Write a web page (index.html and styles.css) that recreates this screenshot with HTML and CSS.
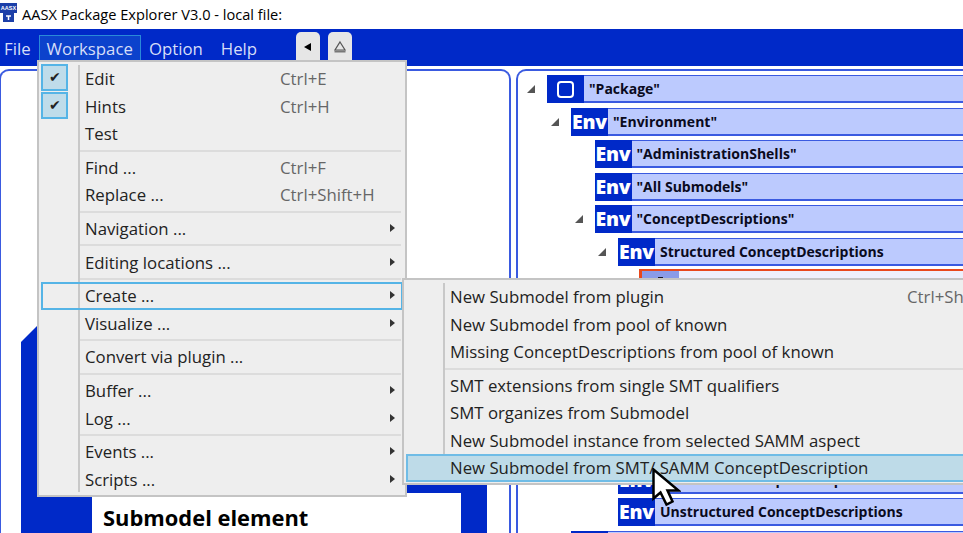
FILE: index.html
```html
<!DOCTYPE html>
<html lang="en">
<head>
    <meta charset="UTF-8" />
    <title>AASX Package Explorer</title>
    <link rel="stylesheet" href="styles.css">
</head>
<body>
<div class="titlebar">
    <svg class="app-icon" width="18" height="21" viewBox="0 0 18 21">
        <rect x="0" y="0" width="17" height="10" fill="#1c3fa8"/>
        <text x="8.500" y="7" font-size="5.500" font-weight="700" fill="#fff" text-anchor="middle" font-family="Liberation Sans">AASX</text>
        <rect x="3" y="10" width="11" height="9" fill="#1c3fa8"/>
        <path d="M6 13h5M8.500 13v4" stroke="#fff" stroke-width="1.500"/>
    </svg>
    <span>AASX Package Explorer V3.0 - local file:</span>
</div>

<div class="menubar">
    <span class="top-item first">File</span>
    <span class="top-item open">Workspace</span>
    <span class="top-item">Option</span>
    <span class="top-item help">Help</span>
    <div class="tool-btns">
        <div class="tool-btn"><svg width="10" height="10" viewBox="0 0 10 10"><path d="M8 1v8L1 5z" fill="#000"/></svg></div>
        <div class="tool-btn"><svg width="14" height="14" viewBox="0 0 14 14"><path d="M7 2l5 8H2z" fill="none" stroke="#555" stroke-width="1.200"/><path d="M1.500 11.500h11" stroke="#777" stroke-width="2"/></svg></div>
    </div>
</div>

<div class="workspace">
    <div class="panel panel-left">
        <div class="element-box">
            <div class="element-card">
                <h2>Submodel element</h2>
            </div>
        </div>
    </div>
    <div class="panel panel-right">
        <div class="tree">
            <div class="row lvl0 arrow"><b class="ico"><i class="ico-square"></i></b><span>"Package"</span></div>
            <div class="row lvl1 arrow"><b class="ico">Env</b><span>"Environment"</span></div>
            <div class="row lvl2"><b class="ico">Env</b><span>"AdministrationShells"</span></div>
            <div class="row lvl2"><b class="ico">Env</b><span>"All Submodels"</span></div>
            <div class="row lvl2 arrow"><b class="ico">Env</b><span>"ConceptDescriptions"</span></div>
            <div class="row lvl3 arrow"><b class="ico">Env</b><span>Structured ConceptDescriptions</span></div>
            <div class="row lvl4 selected"><b class="ico"><i class="ico-mark"></i></b><span></span></div>
            <div class="row-gap"></div>
            <div class="row lvl3"><b class="ico">Env</b><span>Submodel ConceptDescriptions</span></div>
            <div class="row lvl3"><b class="ico">Env</b><span>Unstructured ConceptDescriptions</span></div>
            <div class="row lvl1"><b class="ico"></b><span></span></div>
        </div>
    </div>
</div>

<div class="menu main-menu">
    <div class="item checked"><em>✔</em><span>Edit</span><kbd>Ctrl+E</kbd></div>
    <div class="item checked"><em>✔</em><span>Hints</span><kbd>Ctrl+H</kbd></div>
    <div class="item"><span>Test</span></div>
    <hr>
    <div class="item"><span>Find ...</span><kbd>Ctrl+F</kbd></div>
    <div class="item"><span>Replace ...</span><kbd>Ctrl+Shift+H</kbd></div>
    <hr>
    <div class="item sub"><span>Navigation ...</span></div>
    <hr>
    <div class="item sub"><span>Editing locations ...</span></div>
    <hr>
    <div class="item sub active-outline"><span>Create ...</span></div>
    <div class="item sub"><span>Visualize ...</span></div>
    <hr>
    <div class="item"><span>Convert via plugin ...</span></div>
    <hr>
    <div class="item sub"><span>Buffer ...</span></div>
    <div class="item sub"><span>Log ...</span></div>
    <hr>
    <div class="item sub"><span>Events ...</span></div>
    <div class="item sub"><span>Scripts ...</span></div>
</div>

<div class="menu sub-menu">
    <div class="item"><span>New Submodel from plugin</span><kbd>Ctrl+Shift+P</kbd></div>
    <div class="item"><span>New Submodel from pool of known</span></div>
    <div class="item"><span>Missing ConceptDescriptions from pool of known</span></div>
    <hr>
    <div class="item"><span>SMT extensions from single SMT qualifiers</span></div>
    <div class="item"><span>SMT organizes from Submodel</span></div>
    <div class="item"><span>New Submodel instance from selected SAMM aspect</span></div>
    <div class="item highlighted"><span>New Submodel from SMT/ SAMM ConceptDescription</span></div>
</div>

<svg class="cursor" width="29" height="39" viewBox="0 0 29 39">
    <path d="M1.500 1.500v29l7-6 6 12 6-3-5-11h11z" fill="#fff" stroke="#000" stroke-width="2.500"/>
</svg>
</body>
</html>
```

FILE: styles.css
```css
body {
    margin: 0;
    width: 963px;
    height: 533px;
    overflow: hidden;
    background: #fff;
    font-family: "Open Sans", "Noto Sans", sans-serif;
    position: relative;
}

.titlebar {
    height: 29px;
    display: flex;
    align-items: center;
    gap: 4px;
    font-size: 14.6px;
    color: #000;
    box-sizing: border-box;
    padding-bottom: 2px;
}

.app-icon {
    flex: none;
}

.menubar {
    height: 37px;
    background: #0029c8;
    display: flex;
    align-items: flex-start;
    color: #d6def8;
    font-size: 16.8px;
}

.top-item {
    height: 26px;
    line-height: 27px;
    padding: 0 8px;
    margin-top: 6px;
    box-sizing: border-box;
}

.top-item.first {
    padding: 0 8px 0 4px;
}

.top-item.help {
    margin-left: 2px;
}

.top-item.open {
    background: #0c42cc;
    outline: 1px solid #2a8ad8;
    outline-offset: -1px;
}

.tool-btns {
    display: flex;
    gap: 8px;
    margin: 3px 0 0 31px;
}

.tool-btn {
    width: 24px;
    height: 30px;
    background: #e6e6e6;
    border-radius: 5px 5px 0 0;
    display: flex;
    align-items: center;
    justify-content: center;
}

.workspace {
    height: 467px;
    box-sizing: border-box;
    padding: 3px 0 0;
    display: grid;
    grid-template-columns: 511px 447px;
    grid-template-rows: 464px;
    gap: 5px;
}

.panel {
    border: 2px solid #3a5ae0;
    border-radius: 10px 10px 0 0;
    border-bottom: none;
    margin-left: -1px;
    overflow: hidden;
}

.panel-left {
    display: flex;
    align-items: flex-end;
}

.panel-right {
    margin-left: 0;
    margin-right: -12px;
}

.element-box {
    margin: 0 22px 0 20px;
    height: 223px;
    flex: 1;
    background: #0029c8;
    clip-path: polygon(32px 0, 100% 0, 100% 100%, 0 100%, 0 32px);
    display: flex;
    align-items: flex-end;
    padding: 0 26px 0 71px;
}

.element-card {
    flex: 1;
    height: 40px;
    background: #fff;
    padding: 6px 11px;
    box-sizing: border-box;
}

.element-card h2 {
    margin: 0;
    font-size: 21.9px;
    line-height: 38px;
    color: #000;
}

.tree {
    padding: 4px 0 0 6px;
    display: flex;
    flex-direction: column;
    gap: 4.6px;
}

.row {
    height: 28px;
    display: flex;
    background: #bccafe;
    border: solid #3a5ae0;
    border-width: 1px 2px 2px 0;
    box-sizing: border-box;
    font-size: 14px;
    font-weight: 700;
    color: #0a0a20;
    line-height: 26px;
    position: relative;
    flex: none;
}

.row span {
    margin-left: 5px;
}

.row-gap {
    height: 157.8px;
    flex: none;
}

.ico {
    width: 37px;
    margin: -1px 0 -2px;
    background: #0029c8;
    color: #fff;
    font-size: 19.5px;
    line-height: 28px;
    font-style: normal;
    flex: none;
    display: flex;
    align-items: center;
    justify-content: center;
    letter-spacing: -0.3px;
}

.ico-square {
    width: 13px;
    height: 13px;
    border: 2px solid #fff;
    border-radius: 4px;
    display: block;
}

.lvl0 { margin-left: 23px; }
.lvl1 { margin-left: 47px; }
.lvl2 { margin-left: 70.5px; }
.lvl3 { margin-left: 94px; }
.lvl4 { margin-left: 114.5px; }

.arrow::before {
    content: "";
    position: absolute;
    left: -20px;
    top: 9px;
    width: 0;
    height: 0;
    border-bottom: 8px solid #555;
    border-left: 8px solid transparent;
}

.selected {
    background: #eef0fb;
    border: solid #e8481c;
    border-width: 2px 2px 2px 3px;
    margin-top: -2px;
    margin-bottom: 2px;
}

.selected .ico {
    background: #8a9be8;
    margin: 0;
    align-items: flex-start;
    padding-top: 6px;
    box-sizing: border-box;
}

.ico-mark {
    width: 5px;
    height: 2px;
    background: #1a1a2a;
    display: block;
}

.menu {
    position: absolute;
    background: #eee;
    border: 2px solid #c4c4c4;
    box-sizing: border-box;
    font-size: 16.8px;
    color: #222;
    padding: 3px 2px 2px;
}

.main-menu {
    left: 37px;
    top: 60px;
    width: 370px;
    height: 437px;
}

.sub-menu {
    left: 402px;
    top: 278px;
    width: 575px;
    height: 207px;
}

/* icon gutter line */
.menu::before {
    content: "";
    position: absolute;
    top: 3px;
    bottom: 3px;
    left: 39px;
    width: 2px;
    background: #c8c8c8;
}

.item {
    height: 27.5px;
    line-height: 27px;
    display: flex;
    padding-left: 44px;
    position: relative;
    box-sizing: border-box;
    white-space: nowrap;
}

.item kbd {
    position: absolute;
    left: 239px;
    font: inherit;
    color: #666;
}

.sub-menu .item kbd {
    left: 501px;
}

.item em {
    position: absolute;
    left: 0;
    top: -1px;
    width: 27px;
    height: 27px;
    box-sizing: border-box;
    background: #bfdcea;
    border: 2px solid #55b4e6;
    font-style: normal;
    font-size: 14px;
    text-align: center;
    line-height: 22px;
    color: #222;
}

.sub::after {
    content: "";
    position: absolute;
    right: 8px;
    top: 9px;
    border-left: 5px solid #333;
    border-top: 4px solid transparent;
    border-bottom: 4px solid transparent;
}

.menu hr {
    border: none;
    height: 2px;
    background: #dcdcdc;
    margin: 2.1px 2px 2.1px 39px;
}

.active-outline {
    outline: 2px solid #55b4e6;
    outline-offset: -2px;
}

.highlighted {
    background: #bedbe8;
    outline: 2px solid #6fbce6;
    outline-offset: -2px;
}

.cursor {
    position: absolute;
    left: 652px;
    top: 468px;
}
```
